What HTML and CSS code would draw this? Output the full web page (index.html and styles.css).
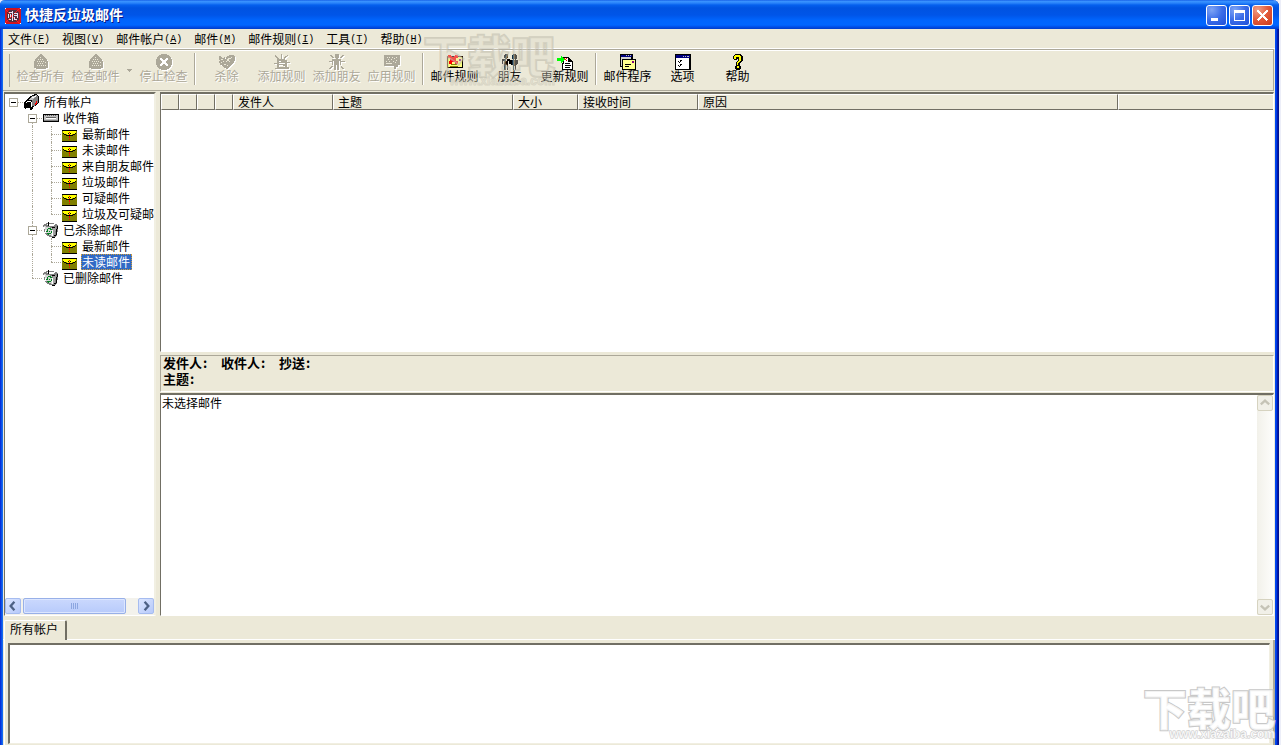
FILE: index.html
```html
<!DOCTYPE html>
<html lang="zh-CN">
<head>
<meta charset="utf-8">
<title>快捷反垃圾邮件</title>
<link rel="stylesheet" href="styles.css">
</head>
<body>
<svg class="defs" aria-hidden="true">
  <symbol id="envelope" viewBox="0 0 16 12">
    <path fill="#808000" d="M0 0h15v12H0z"/>
    <path fill="#ff0" d="M1 1h13v2h-1v1h-3v1H9v1H6V5H5V4H2V3H1z"/>
    <path fill="#000" d="M0 0h15v1H0zM0 11h15v1H0zM1 3h1v1H1zM2 4h2v1H2zM4 5h2v1H4zM9 5h2v1H9zM11 4h2v1h-2zM13 3h1v1h-1zM6 3h1v1H6zM8 3h1v1H8zM6 5h3v1H6z"/>
    <path fill="#f00" d="M7 2h1v1H7zM7 4h1v1H7zM7 6h1v2H7zM7 9h1v1H7z"/>
  </symbol>
  <symbol id="trash" viewBox="0 0 16 16">
    <path fill="#808080" d="M0 3l4-2h6l5 2v4l-1 6-3 3-4-1-5-3z"/>
    <path fill="#d4d4d4" d="M1 4l8 2v8l-6-3z"/>
    <path fill="#a0a0a0" d="M10 6l3-1-1 8-2 1z"/>
    <path fill="#fff" d="M3 3l2-1h5l3 1-4 1H6zM1 5h1v2H1zM2 8h1v3H2zM9 8h1v6H9z"/>
    <path fill="#000" d="M5 0h1v4H5zM14 4h1v3h-1zM13 7h1v6h-1zM11 13h2v1h-2zM9 15h3v1H9zM9 5h3v1H9z"/>
    <path fill="#008020" d="M5 6h3v1H5zM4 7h1v2H4zM7 7h2v1H7zM3 9h2v1H3zM8 9h1v2H8zM4 11h2v1H4zM6 11h2v1H6zM6 9h1v1H6zM5 12h1v1H5z"/>
  </symbol>
  <symbol id="house" viewBox="0 0 16 16">
    <path d="M7 0h2v1h1v1h1v1h1v1h1v1h1v2h1v7h-2v1H3v-1H1V7h1V5h1V4h1V3h1V2h1V1h1z"/>
    <path fill="#ece9d8" d="M7 3h1v1H7zM9 5h1v1H9zM5 5h1v1H5zM7 5h1v1H7zM4 7h1v1H4zM6 7h1v1H6zM8 7h1v1H8zM10 7h1v1h-1zM12 8h1v1h-1zM5 9h1v1H5zM7 9h1v1H7zM9 9h1v1H9zM4 11h1v1H4zM6 11h1v1H6zM8 11h1v1H8zM10 11h1v1h-1zM12 11h1v1h-1z"/>
  </symbol>
</svg>
<div class="window">
  <header class="titlebar">
    <svg class="app-icon" viewBox="0 0 16 16" aria-hidden="true">
      <path fill="#d01420" d="M0 0h16v16H0z"/>
      <path fill="#503040" d="M4 2h8l2 3v6l-2 3H4l-2-3V5z"/>
      <path fill="none" stroke="#f22" stroke-width="1" d="M0 1l15 15M15 0L0 15"/>
      <path fill="#e8e0f0" d="M4 4h3v1H4zM3 6h1v4H3zM5 6h1v3H5zM7 3h1v10H7zM9 5h3v1H9zM9 7h3v1H9zM12 5h1v5h-1zM9 9h1v3H9zM4 11h2v1H4zM10 11h2v1h-2z"/>
      <path fill="#fff" d="M0 0h1v1H0zM15 0h1v1h-1zM0 15h1v1H0zM15 15h1v1h-1z"/>
    </svg>
    <h1 class="title">快捷反垃圾邮件</h1>
    <div class="window-buttons">
      <button class="wbtn" aria-label="最小化"><svg viewBox="0 0 19 19"><path fill="#fff" d="M4 12h7v3H4z"/></svg></button>
      <button class="wbtn" aria-label="最大化"><svg viewBox="0 0 19 19"><path fill="#fff" fill-rule="evenodd" d="M4 4h11v11H4zM5 7v7h9V7z"/></svg></button>
      <button class="wbtn close" aria-label="关闭"><svg viewBox="0 0 19 19"><path fill="none" stroke="#fff" stroke-width="2" d="M4.500 4.500l10 10M14.500 4.500l-10 10"/></svg></button>
    </div>
  </header>

  <nav class="menubar">
    <button>文件<span>(<u>F</u>)</span></button>
    <button>视图<span>(<u>V</u>)</span></button>
    <button>邮件帐户<span>(<u>A</u>)</span></button>
    <button>邮件<span>(<u>M</u>)</span></button>
    <button>邮件规则<span>(<u>I</u>)</span></button>
    <button>工具<span>(<u>T</u>)</span></button>
    <button>帮助<span>(<u>H</u>)</span></button>
  </nav>

  <div class="toolbar" role="toolbar" aria-label="工具栏">
    <i class="grip"></i>
    <button class="tool" disabled><svg viewBox="0 0 16 16"><use href="#house"/></svg>检查所有</button>
    <button class="tool" disabled><svg viewBox="0 0 16 16"><use href="#house"/></svg>检查邮件</button>
    <button class="drop" disabled aria-label="检查邮件选项"><svg viewBox="0 0 5 3"><path d="M0 0h5v1H4v1H3v1H2V2H1V1H0z"/></svg></button>
    <button class="tool" disabled><svg viewBox="0 0 16 16"><path d="M5 0h6v1h2v1h1v1h1v2h1v6h-1v2h-1v1h-1v1h-2v1H5v-1H3v-1H2v-1H1v-2H0V5h1V3h1V2h1V1h2z"/><path fill="#fff" d="M4 4h2v1h1v1h2V5h1V4h2v2h-1v1h-1v2h1v1h1v2h-2v-1H9v-1H7v1H6v1H4v-2h1V9h1V7H5V6H4z"/></svg>停止检查</button>
    <i class="sep"></i>
    <button class="tool" disabled><svg viewBox="0 0 16 16"><path d="M0 2h2v1h1v1h2V3h1v2h1V3h1V2h2V1h5v1h1v5h-1v2h-1v1h-1v1h-1v1h-1v1h-1v1H9v1H7v-1H5v-1H4v-1H3v-1H1V9H0V7h1V6H0z"/><path fill="#ece9d8" d="M2 5h2v1H2zM4 7h1v1H4zM2 8h1v1H2zM5 10h2v1H5zM7 7h1v1H7zM9 4h3v1H9zM8 5h2v2H8zM12 3h1v1h-1zM10 7h1v1h-1zM8 11h1v1H8z"/></svg>杀除</button>
    <button class="tool" disabled><svg viewBox="0 0 16 16"><path d="M7 0h1v5H7zM1 1h1v1h1v1h1v1h1v1H3V4H2V3H1zM13 1h1v1h-1v1h-1v1h-1v1h-1V3h1V2h2zM3 5h8v1h2v2h3v1h-3v6H3v-5H0V9h3zM5 7v1h2V7zM5 9v1h6V9zM5 11v2h6v-1H9v-1z" fill-rule="evenodd"/><path d="M1 14h2v1H1zM13 13h2v2h-2z"/></svg>添加规则</button>
    <button class="tool" disabled><svg viewBox="0 0 16 16"><path d="M6 0h4v4H9v1h3v2h4v1h-4v3h-1V7h-1v9H8v-5H7v5H5V7H4v4H3V8H0V7h3V5h4V4H6zM1 1h2v1h1v1h1v1H3V3H2V2H1zM13 1h2v1h-1v1h-1v1h-2V3h1V2h1zM2 12h2v1H3v1H2v1H0v-1h1v-1h1zM12 12h1v1h1v1h1v1h-2v-1h-1z"/></svg>添加朋友</button>
    <button class="tool" disabled><svg viewBox="0 0 16 16"><path d="M0 1h16v10h-2v2h-2v2h-2v-3H0z"/><path fill="#ece9d8" d="M2 9h6v1H2zM3 3h1v1H3zM5 3h1v1H5zM8 3h1v1H8zM4 5h1v1H4zM7 5h1v1H7zM10 4h1v1h-1zM12 3h1v1h-1zM12 6h1v1h-1zM9 7h1v1H9zM2 7h1v1H2zM5 7h1v1H5zM11 8h1v1h-1z"/></svg>应用规则</button>
    <i class="sep"></i>
    <button class="tool"><svg viewBox="0 0 16 16"><path d="M0 2h16v12H0z"/><path fill="#ffff80" d="M1 3h14v10H1z"/><path fill="#808000" d="M4 10h6v1H4zM3 12h8v1H3z"/><path fill="#800080" d="M12 5h2v2h-2z"/><path fill="#f00" d="M1 1h3v1h1v1h2V2h1V1h3v3H9v3h2v3H8V8H5v2H2V7h1V4H1z"/></svg>邮件规则</button>
    <button class="tool"><svg viewBox="0 0 16 16"><path d="M3 0h3v4H5v1h3v5H7V7H6v9H5v-5H4v5H2V7H1v3H0V5h3V4H2V1h1zM10 1h1V0h3v1h1v4h-1v1h2v4h-1v1h-1v5h-1v-4h-1v4h-1v-5h-2v-1H8V6h3V5h-1z"/><path fill="#ece9d8" d="M4 5h1v2H4zM12 5h1v1h-1z"/></svg>朋友</button>
    <button class="tool"><svg viewBox="0 0 16 16"><path d="M6 3h6v1h1v1h1v1h1v1h1v9H5V9h1z"/><path fill="#fff" d="M7 4h4v4h4v7H6v-5h1z"/><path d="M8 9h5v1H8zM8 11h6v1H8zM8 13h5v1H8zM11 4h1v3h3v1h-4z"/><path fill="#f00" d="M7 4h1v1H7zM8 5h1v1H8zM9 6h1v1H9zM9 4h1v1H9z"/><path fill="#0f0" d="M0 4h4V2h1v1h1v1h1v1h1v1H7v1H6v1H5v1H4V7H0z"/></svg>更新规则</button>
    <i class="sep"></i>
    <button class="tool"><svg viewBox="0 0 16 16"><path d="M0 0h13v13H0z"/><path fill="#d0d0d0" d="M1 3h10v9H1z"/><path fill="#000080" d="M1 1h11v2H1z"/><path fill="#c0c0c0" d="M6 1h1v1H6zM8 1h1v1H8zM10 1h1v1h-1z"/><path d="M2 5h14v11H2z"/><path fill="#ffff90" d="M3 6h12v9H3z"/><path fill="#800080" d="M12 7h2v2h-2z"/><path d="M5 10h6v1H5zM5 12h4v1H5z"/></svg>邮件程序</button>
    <button class="tool"><svg viewBox="0 0 16 16"><path d="M0 0h16v16H0z"/><path fill="#fff" d="M1 4h13v11H1z"/><path fill="#000080" d="M1 1h14v3H1z"/><path fill="#c0c0c0" d="M8 2h1v1H8zM10 2h1v1h-1zM12 2h2v1h-2z"/><path d="M3 7h1v1h1v1H4V8H3zM5 6h2v1H6v1H5zM3 11h1v1h1v1H4v-1H3zM5 10h2v1H6v1H5z"/></svg>选项</button>
    <button class="tool"><svg viewBox="0 0 16 16"><path d="M5 0h6v1h1v1h1v5h-1v1h-1v1h-1v3h1v3h-1v1H6v-1H5v-3h1V8h1V7h1V5H7v1H4V5H3V2h1V1h1z"/><path fill="#ff0" d="M5 1h5v1h1v5h-1v1H9v1H8v2H7V8h1V7h1V3H6v2H4V2h1zM7 12h2v2H7z"/></svg>帮助</button>
  </div>

  <main class="main">
    <aside class="sidebar">
      <ul class="tree" role="tree">
        <li class="row" role="treeitem" aria-level="1"><span class="g"><button class="toggle" aria-label="折叠"></button></span><svg class="ico" viewBox="0 0 16 16"><path d="M1 7h1V6h1V5h1V4h1V3h1V2h2V1h2V0h3v1h1v1h1v7h-1v1h-1v1h-1v1h-2v1h-1v2H8v1H6v-1H1v-1H0V8h1z"/><path fill="#808080" d="M8 6l5-4h1v7l-4 3H8z"/><path fill="#c0c0c0" d="M4 6l5-4 3-1 1 1-5 4z"/><path fill="#fff" d="M3 7h4v1H3zM7 8h1v5H7zM8 3h2v1H8zM10 2h2v1h-2zM2 8h1v1H2zM2 14h4v1H2z"/><path fill="#f00" d="M12 7h1v3h-1zM11 9h1v2h-1z"/></svg><span class="name">所有帐户</span></li>
        <li class="row" role="treeitem" aria-level="2"><span class="g none"></span><span class="g down"><button class="toggle" aria-label="折叠"></button></span><svg class="ico" viewBox="0 0 16 16"><path d="M0 4h16v8H0z"/><path fill="#c0c0c0" d="M1 5h14v6H1z"/><path fill="#606060" d="M2 5h1v1H2zM4 5h1v1H4zM6 5h1v1H6zM8 5h1v1H8zM10 5h1v1h-1zM12 5h1v1h-1zM3 7h10v1H3z"/><path fill="#fff" d="M3 8h10v1H3z"/><path fill="#808080" d="M1 10h14v1H1z"/></svg><span class="name">收件箱</span></li>
        <li class="row" role="treeitem" aria-level="3"><span class="g none"></span><span class="g line"></span><span class="g tee"></span><svg class="ico env" viewBox="0 0 16 12"><use href="#envelope"/></svg><span class="name">最新邮件</span></li>
        <li class="row" role="treeitem" aria-level="3"><span class="g none"></span><span class="g line"></span><span class="g tee"></span><svg class="ico env" viewBox="0 0 16 12"><use href="#envelope"/></svg><span class="name">未读邮件</span></li>
        <li class="row" role="treeitem" aria-level="3"><span class="g none"></span><span class="g line"></span><span class="g tee"></span><svg class="ico env" viewBox="0 0 16 12"><use href="#envelope"/></svg><span class="name">来自朋友邮件</span></li>
        <li class="row" role="treeitem" aria-level="3"><span class="g none"></span><span class="g line"></span><span class="g tee"></span><svg class="ico env" viewBox="0 0 16 12"><use href="#envelope"/></svg><span class="name">垃圾邮件</span></li>
        <li class="row" role="treeitem" aria-level="3"><span class="g none"></span><span class="g line"></span><span class="g tee"></span><svg class="ico env" viewBox="0 0 16 12"><use href="#envelope"/></svg><span class="name">可疑邮件</span></li>
        <li class="row" role="treeitem" aria-level="3"><span class="g none"></span><span class="g line"></span><span class="g corner"></span><svg class="ico env" viewBox="0 0 16 12"><use href="#envelope"/></svg><span class="name">垃圾及可疑邮件</span></li>
        <li class="row" role="treeitem" aria-level="2"><span class="g none"></span><span class="g line tee"><button class="toggle" aria-label="折叠"></button></span><svg class="ico" viewBox="0 0 16 16"><use href="#trash"/></svg><span class="name">已杀除邮件</span></li>
        <li class="row" role="treeitem" aria-level="3"><span class="g none"></span><span class="g line"></span><span class="g tee"></span><svg class="ico env" viewBox="0 0 16 12"><use href="#envelope"/></svg><span class="name">最新邮件</span></li>
        <li class="row" role="treeitem" aria-level="3" aria-selected="true"><span class="g none"></span><span class="g line"></span><span class="g corner"></span><svg class="ico env" viewBox="0 0 16 12"><use href="#envelope"/></svg><span class="name selected">未读邮件</span></li>
        <li class="row" role="treeitem" aria-level="2"><span class="g none"></span><span class="g corner"></span><svg class="ico" viewBox="0 0 16 16"><use href="#trash"/></svg><span class="name">已删除邮件</span></li>
      </ul>
      <div class="hscroll">
        <button class="sbtn" aria-label="向左滚动"><svg viewBox="0 0 15 15"><path d="M9 3L5 7.500L9 12"/></svg></button>
        <div class="track"><div class="thumb"><i></i><i></i><i></i><i></i></div></div>
        <button class="sbtn" aria-label="向右滚动"><svg viewBox="0 0 15 15"><path d="M6 3l4 4.500L6 12"/></svg></button>
      </div>
    </aside>

    <section class="content">
      <div class="list">
        <table>
          <colgroup><col class="c-flag"><col class="c-flag"><col class="c-flag"><col class="c-flag"><col class="c-from"><col class="c-subject"><col class="c-size"><col class="c-time"><col class="c-reason"><col></colgroup>
          <thead><tr><th></th><th></th><th></th><th></th><th>发件人</th><th>主题</th><th>大小</th><th>接收时间</th><th>原因</th><th></th></tr></thead>
        </table>
      </div>
      <div class="headers">
        <p><b>发件人<span>:</span></b><b>收件人<span>:</span></b><b>抄送<span>:</span></b></p>
        <p><b>主题<span>:</span></b></p>
      </div>
      <div class="preview">
        <p class="message">未选择邮件</p>
        <div class="vscroll">
          <button class="sbtn" disabled aria-label="向上滚动"><svg viewBox="0 0 15 15"><path d="M3 9l4.500-4L12 9"/></svg></button>
          <button class="sbtn" disabled aria-label="向下滚动"><svg viewBox="0 0 15 15"><path d="M3 6l4.500 4L12 6"/></svg></button>
        </div>
      </div>
    </section>
  </main>

  <footer class="bottom">
    <div class="tabs" role="tablist"><button class="tab" role="tab" aria-selected="true">所有帐户</button></div>
    <div class="pane" role="tabpanel"><div class="log"></div></div>
  </footer>

  <div class="mark mark-top">下载吧<small>www.xiazaiba.com</small></div>
  <div class="mark mark-bottom">下载吧<small>www.xiazaiba.com</small></div>
</div>
</body>
</html>
```
FILE: styles.css
```css
* { box-sizing: border-box; }

body {
  margin: 0;
  padding-right: 2px;
  background: #eceef8;
  color: #000;
  font: 12px/16px "Noto Sans CJK SC", sans-serif;
}

button {
  margin: 0;
  padding: 0;
  border: 0;
  background: none;
  color: inherit;
  font: inherit;
}

svg { display: block; flex: none; shape-rendering: crispEdges; }
p, h1, ul { margin: 0; padding: 0; }
.defs { position: absolute; width: 0; height: 0; }

.window {
  position: relative;
  display: flex;
  flex-direction: column;
  height: 100vh;
  overflow: hidden;
  padding: 0 4px 0 3px;
  border-radius: 5px 6px 0 0;
  background:
    linear-gradient(90deg, #0831d9 0 1px, #0a50e8 1px 2px, #166aee 2px 3px, #0000 3px) left / 3px 100% no-repeat,
    linear-gradient(90deg, #0048f1 0 1px, #003de0 1px 2px, #0018b0 2px 3px, #00138c 3px) right / 4px 100% no-repeat,
    #ece9d8;
}

/* Title bar */
.titlebar {
  display: flex;
  align-items: center;
  flex: none;
  height: 29px;
  margin: 0 -4px 0 -3px;
  padding: 2px 6px 0 5px;
  background: linear-gradient(#0a50e0 0, #3d95ff 1px, #2a84fa 3px, #0560ee 5px, #0053e1 8px, #0055e8 15px, #0064fc 20px, #0066ff 25px, #004de6 27px, #003dc8 29px);
}
.app-icon { width: 16px; height: 16px; }
.title {
  flex: 1;
  margin-left: 4px;
  padding-bottom: 3px;
  color: #fff;
  font-size: 14px;
  font-weight: 700;
  line-height: 18px;
  text-shadow: 1px 1px #0a1883;
}
.window-buttons { display: flex; gap: 2px; }
.wbtn {
  width: 21px;
  height: 21px;
  border: 1px solid #fff;
  border-radius: 3px;
  background: radial-gradient(circle at 25% 20%, #7ea4f5, #3a6ce8 50%, #1f4fd8);
}
.wbtn.close { background: radial-gradient(circle at 25% 20%, #f0a088, #e2593a 50%, #c8391a); }

/* Menu */
.menubar {
  display: flex;
  flex: none;
  gap: 12px;
  height: 20px;
  padding: 2px 5px;
  border-bottom: 1px solid #fff;
}
.menubar button { display: flex; line-height: 16px; }
.menubar span { font: 10px/17px "Liberation Mono", monospace; }

/* Toolbar */
.toolbar {
  display: flex;
  flex: none;
  height: 42px;
  margin-right: 1px;
  padding: 3px 3px 2px;
  border: 1px solid #aca899;
  border-left: 0;
  box-shadow: inset 0 1px #fff;
}
.grip {
  width: 3px;
  margin: 1px 3px 1px 1px;
  border-right: 1px solid #aca899;
}
.tool {
  display: flex;
  flex-direction: column;
  align-items: center;
  width: 55px;
  padding-top: 1px;
  line-height: 12px;
  white-space: nowrap;
}
.tool svg { width: 16px; height: 16px; }
.tool:disabled, .drop:disabled {
  color: #aca899;
  fill: #aca899;
  text-shadow: 1px 1px #fff;
}
.tool:disabled svg { filter: drop-shadow(1px 1px #fff); }
.drop { display: flex; align-items: center; width: 13px; padding: 0 4px; }
.drop svg { width: 5px; height: 3px; }
.sep {
  width: 2px;
  margin: 0 3px 3px;
  border-left: 1px solid #aca899;
  border-right: 1px solid #fff;
}

/* Main area */
.main {
  display: flex;
  flex: 1;
  gap: 4px;
  min-height: 0;
  margin: 1px 0 0;
}
.sidebar, .list, .preview {
  border: 1px solid #fff;
  border-top: 2px solid #716f64;
  border-left-color: #716f64;
  background: #fff;
}
.sidebar {
  display: flex;
  flex: none;
  flex-direction: column;
  width: 152px;
  margin-left: 1px;
  overflow: hidden;
  border-right: 2px solid #f1efe2;
}
.tree { flex: 1; min-height: 0; overflow: hidden; list-style: none; }
.row { display: flex; height: 16px; white-space: nowrap; }

/* Dotted connector cells in front of each tree row */
.g { position: relative; flex: none; width: 19px; height: 16px; }
.g::before {
  content: "";
  position: absolute;
  top: 8px;
  left: 8px;
  width: 10px;
  border-top: 1px dotted #aca899;
}
.g::after { content: ""; position: absolute; left: 8px; border-left: 1px dotted #aca899; }
.none::before, .line:not(.tee)::before { display: none; }
.line::after, .tee::after { top: 0; height: 16px; }
.corner::after { top: 0; height: 8px; }
.down::after { top: 8px; height: 8px; }
.toggle {
  position: absolute;
  z-index: 1;
  top: 4px;
  left: 4px;
  width: 9px;
  height: 9px;
  border: 1px solid #aca899;
  background: linear-gradient(#000, #000) center / 5px 1px no-repeat #fff;
}
.ico { width: 16px; height: 16px; }
.env { height: 12px; margin-top: 4px; }
.name { margin-left: 3px; padding: 0 2px 0 1px; line-height: 15px; }
.selected { outline: 1px dotted #d09c3a; outline-offset: -1px; background: #316ac5; color: #fff; }

/* Scroll bars */
.hscroll { display: flex; height: 17px; padding-bottom: 1px; background: #f3f2ec; }
.track { flex: 1; margin: 0 12px 0 2px; }
.thumb {
  display: flex;
  align-items: center;
  justify-content: center;
  gap: 1px;
  height: 16px;
  border: 1px solid #98b0e8;
  border-radius: 2px;
  background: linear-gradient(#cad8fd, #b8cbfb);
  box-shadow: inset 0 0 0 1px #dce6ff;
}
.thumb i { width: 1px; height: 6px; background: #8ca6e0; }
.sbtn {
  width: 16px;
  height: 16px;
  border: 1px solid #a6bcf0;
  border-radius: 2px;
  background: linear-gradient(135deg, #dce6ff, #b6c9fa);
}
.sbtn svg { width: 14px; height: 14px; shape-rendering: auto; }
.sbtn path { fill: none; stroke: #4d6185; stroke-width: 2.5; }
.sbtn:disabled { border-color: #d6d3c0; background: #f1f0e8; }
.sbtn:disabled path { stroke: #c5c3b6; }
.vscroll {
  display: flex;
  flex-direction: column;
  justify-content: space-between;
  flex: none;
  width: 16px;
  background: linear-gradient(90deg, #f2f1ea, #fdfdfb);
}

/* Right side */
.content {
  display: flex;
  flex: 1;
  flex-direction: column;
  min-width: 0;
  margin-right: 1px;
}
.list { flex: 7; min-height: 0; }
table { width: 100%; border-collapse: separate; border-spacing: 0; table-layout: fixed; }
th {
  height: 16px;
  padding: 0 0 0 4px;
  border: 1px solid #fff;
  border-right-color: #716f64;
  border-bottom-color: #716f64;
  background: #ece9d8;
  font-weight: 400;
  line-height: 14px;
  text-align: left;
}
th:last-child { border-right: 0; }
.c-flag { width: 18px; }
.c-from { width: 100px; }
.c-subject { width: 180px; }
.c-size { width: 65px; }
.c-time { width: 120px; }
.c-reason { width: 420px; }

.headers {
  flex: none;
  height: 37px;
  margin: 3px 0 1px;
  border: 1px solid #fff;
  border-top-color: #aca899;
  border-left-color: #aca899;
}
.headers p { display: flex; gap: 12px; height: 16px; padding-left: 2px; }
.headers b { display: flex; font-size: 13px; line-height: 14px; }
.headers span { width: 7px; padding-left: 1px; }

.preview { display: flex; flex: 6; min-height: 0; }
.message { flex: 1; padding-left: 1px; }

/* Bottom tab panel */
.bottom { display: flex; flex: none; flex-direction: column; height: 129px; padding-top: 4px; }
.tabs { display: flex; height: 20px; padding-left: 1px; border-bottom: 1px solid #fff; }
.tab {
  width: 63px;
  height: 20px;
  padding: 0 8px 3px 5px;
  border: 1px solid #fff;
  border-right: 2px solid #716f64;
  border-bottom: 0;
  border-radius: 2px 2px 0 0;
  background: #ece9d8;
  line-height: 16px;
  white-space: nowrap;
}
.pane {
  display: flex;
  flex: 1;
  margin-left: 1px;
  padding: 3px 3px 1px;
  border-left: 1px solid #fff;
  border-right: 2px solid #aca899;
}
.log {
  flex: 1;
  border: 2px solid #716f64;
  border-right: 1px solid #f1efe2;
  border-bottom: 1px solid #f1efe2;
  background: #fff;
}

/* Site watermark */
.mark {
  position: absolute;
  color: #fffc;
  font-size: 44px;
  font-weight: 900;
  line-height: 56px;
  white-space: nowrap;
  -webkit-text-stroke: 2px #c8c8c8;
  paint-order: stroke;
  pointer-events: none;
}
.mark small {
  position: absolute;
  right: 0;
  bottom: -6px;
  font: 700 12px/14px "Liberation Sans", sans-serif;
  -webkit-text-stroke: 1px #c8c8c8;
}
.mark-top { top: 26px; left: 423px; color: #dedbcb66; -webkit-text-stroke-color: #b8b5a688; }
.mark-top small { -webkit-text-stroke-color: #b8b5a666; }
.mark-bottom { right: 4px; bottom: 10px; }
```
